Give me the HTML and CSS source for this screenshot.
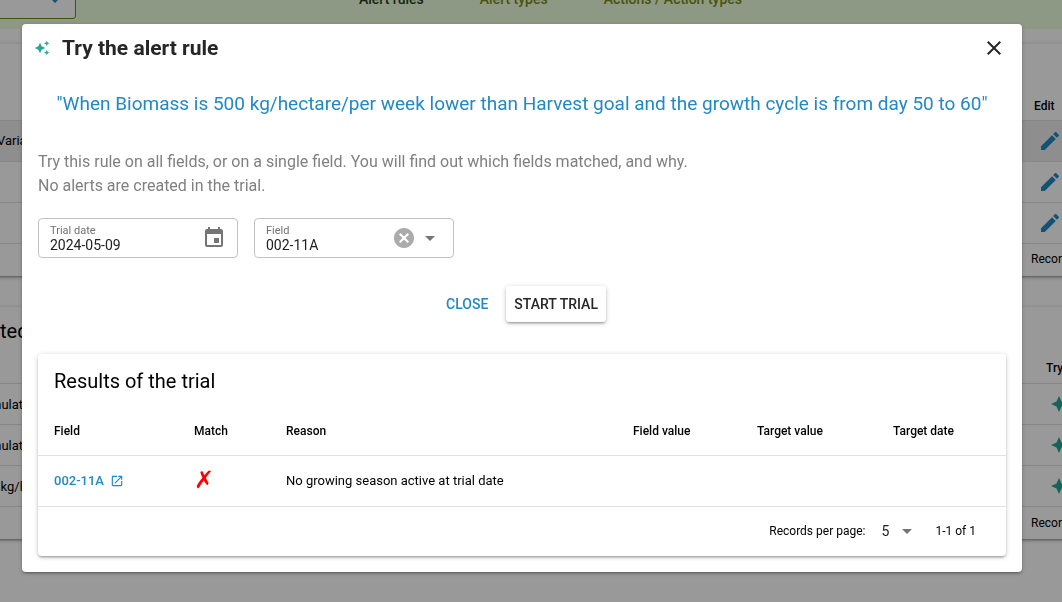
FILE: index.html
```html
<!DOCTYPE html>
<html lang="en">
<head>
    <meta charset="UTF-8">
    <meta name="viewport" content="width=device-width, initial-scale=1.0">
    <title>Try the alert rule</title>
    <link rel="stylesheet" href="styles.css">
</head>
<body>
    <!-- Shared icons -->
    <svg class="icon-defs" aria-hidden="true">
        <symbol id="icon-sparkle" viewBox="0 0 24 24"><path d="M19 9l1.25-2.75L23 5l-2.75-1.25L19 1l-1.25 2.75L15 5l2.75 1.25L19 9zm-7.5.5L9 4 6.5 9.5 1 12l5.5 2.5L9 20l2.5-5.5L17 12l-5.5-2.5zM19 15l-1.25 2.75L15 19l2.75 1.25L19 23l1.25-2.75L23 19l-2.75-1.25L19 15z"/></symbol>
        <symbol id="icon-edit" viewBox="0 0 24 24"><path d="M3 17.25V21h3.75L17.81 9.94l-3.75-3.75L3 17.25zM20.71 7.04c.39-.39.39-1.02 0-1.41l-2.34-2.34c-.39-.39-1.02-.39-1.41 0l-1.83 1.83 3.75 3.75 1.83-1.83z"/></symbol>
        <symbol id="icon-arrow" viewBox="0 0 24 24"><path d="M7 10l5 5 5-5z"/></symbol>
    </svg>

    <!-- Page behind the dialog -->
    <div class="page">
        <header class="top-bar">
            <div class="farm-select">
                <select aria-label="Farm"><option></option></select>
                <svg class="chevron" viewBox="0 0 24 24"><path d="M7.41 8.59L12 13.17l4.59-4.58L18 10l-6 6-6-6z"/></svg>
            </div>
            <nav class="tabs">
                <a href="#" class="active">Alert rules</a>
                <a href="#">Alert types</a>
                <a href="#">Actions / Action types</a>
            </nav>
        </header>

        <section class="card rules">
            <table>
                <thead>
                    <tr><th></th><th class="action">Edit</th></tr>
                </thead>
                <tbody>
                    <tr class="selected"><td>Variable</td><td class="action"><svg class="icon edit"><use href="#icon-edit"/></svg></td></tr>
                    <tr><td></td><td class="action"><svg class="icon edit"><use href="#icon-edit"/></svg></td></tr>
                    <tr><td></td><td class="action"><svg class="icon edit"><use href="#icon-edit"/></svg></td></tr>
                </tbody>
            </table>
            <div class="card-footer"><span>Records</span></div>
        </section>

        <section class="card suggested">
            <h2>ted</h2>
            <table>
                <thead>
                    <tr><th></th><th class="action">Try</th></tr>
                </thead>
                <tbody>
                    <tr><td>mulated</td><td class="action"><svg class="icon sparkle"><use href="#icon-sparkle"/></svg></td></tr>
                    <tr><td>mulated</td><td class="action"><svg class="icon sparkle"><use href="#icon-sparkle"/></svg></td></tr>
                    <tr><td>0 kg/ha</td><td class="action"><svg class="icon sparkle"><use href="#icon-sparkle"/></svg></td></tr>
                </tbody>
            </table>
            <div class="card-footer"><span>Records</span></div>
        </section>
    </div>

    <!-- Dialog -->
    <div class="overlay">
        <div class="dialog" role="dialog" aria-modal="true" aria-labelledby="dialogTitle">
            <div class="dialog-header">
                <svg class="icon sparkle small"><use href="#icon-sparkle"/></svg>
                <h1 id="dialogTitle">Try the alert rule</h1>
                <button type="button" class="icon-button" aria-label="Close dialog">
                    <svg class="icon" viewBox="0 0 24 24"><path d="M19 6.41L17.59 5 12 10.59 6.41 5 5 6.41 10.59 12 5 17.59 6.41 19 12 13.41 17.59 19 19 17.59 13.41 12z"/></svg>
                </button>
            </div>

            <p class="rule-text">"When Biomass is 500 kg/hectare/per week lower than Harvest goal and the growth cycle is from day 50 to 60"</p>

            <p class="intro">Try this rule on all fields, or on a single field. You will find out which fields matched, and why.<br>No alerts are created in the trial.</p>

            <form class="trial-form">
                <div class="fields">
                    <div class="field">
                        <div class="field-control">
                            <label for="trialDate">Trial date</label>
                            <input type="text" id="trialDate" value="2024-05-09">
                        </div>
                        <button type="button" class="icon-button muted" aria-label="Pick a date">
                            <svg class="icon" viewBox="0 0 24 24"><path d="M17 12h-5v5h5v-5zM16 1v2H8V1H6v2H5c-1.11 0-1.99.9-1.99 2L3 19c0 1.1.89 2 2 2h14c1.1 0 2-.9 2-2V5c0-1.1-.9-2-2-2h-1V1h-2zm3 18H5V8h14v11z"/></svg>
                        </button>
                    </div>
                    <div class="field">
                        <div class="field-control">
                            <label for="trialField">Field</label>
                            <select id="trialField"><option>002-11A</option></select>
                        </div>
                        <button type="button" class="icon-button clear" aria-label="Clear field">
                            <svg class="icon" viewBox="0 0 24 24"><path d="M12 2C6.47 2 2 6.47 2 12s4.47 10 10 10 10-4.47 10-10S17.53 2 12 2zm5 13.59L15.59 17 12 13.41 8.41 17 7 15.59 10.59 12 7 8.41 8.41 7 12 10.59 15.59 7 17 8.41 13.41 12 17 15.59z"/></svg>
                        </button>
                        <svg class="icon arrow"><use href="#icon-arrow"/></svg>
                    </div>
                </div>
                <div class="actions">
                    <button type="button" class="btn flat">CLOSE</button>
                    <button type="button" class="btn raised">START TRIAL</button>
                </div>
            </form>

            <section class="results">
                <h2>Results of the trial</h2>
                <table>
                    <colgroup>
                        <col class="col-field">
                        <col class="col-match">
                        <col>
                        <col class="col-value">
                        <col class="col-target">
                        <col class="col-date">
                    </colgroup>
                    <thead>
                        <tr>
                            <th>Field</th>
                            <th>Match</th>
                            <th>Reason</th>
                            <th>Field value</th>
                            <th>Target value</th>
                            <th>Target date</th>
                        </tr>
                    </thead>
                    <tbody>
                        <tr>
                            <td>
                                <a href="#" class="field-link">002-11A
                                    <svg viewBox="0 0 24 24"><path d="M19 19H5V5h7V3H5c-1.11 0-2 .9-2 2v14c0 1.1.89 2 2 2h14c1.1 0 2-.9 2-2v-7h-2v7zM14 3v2h3.59l-9.83 9.83 1.41 1.41L19 6.41V10h2V3h-7z"/></svg>
                                </a>
                            </td>
                            <td class="no-match">✗</td>
                            <td>No growing season active at trial date</td>
                            <td></td>
                            <td></td>
                            <td></td>
                        </tr>
                    </tbody>
                </table>
                <div class="pagination">
                    <label for="perPage">Records per page:</label>
                    <div class="per-page">
                        <select id="perPage"><option>5</option></select>
                        <svg class="icon arrow"><use href="#icon-arrow"/></svg>
                    </div>
                    <span>1-1 of 1</span>
                </div>
            </section>
        </div>
    </div>
</body>
</html>
```
FILE: styles.css
```css
/* General Styles */
* {
    box-sizing: border-box;
}

body {
    margin: 0;
    min-height: 100vh;
    overflow: hidden;
    font-family: Roboto, sans-serif;
    font-size: 14px;
    line-height: 21px;
    color: #000;
    background-color: #fff;
}

h1, h2, p {
    margin: 0;
}

a {
    text-decoration: none;
}

button, input, select {
    font-family: inherit;
    border: none;
    padding: 0;
    margin: 0;
    background: none;
    outline: none;
}

button {
    cursor: pointer;
}

select {
    appearance: none;
}

table {
    width: 100%;
    border-collapse: collapse;
    table-layout: fixed;
}

th, td {
    padding: 0 16px;
    text-align: left;
    white-space: nowrap;
    border-bottom: 1px solid #e0e0e0;
}

th {
    font-size: 12px;
    font-weight: 500;
}

td {
    font-size: 13px;
}

.icon-defs {
    display: none;
}

.icon {
    display: block;
    width: 24px;
    height: 24px;
    flex-shrink: 0;
    fill: currentColor;
}

.icon.small {
    width: 16px;
    height: 16px;
}

.sparkle {
    color: #26a69a;
}

/* Page behind the dialog */
.page {
    margin: 0 -10px;
}

.top-bar {
    display: flex;
    align-items: flex-end;
    gap: 283px;
    height: 29px;
    padding-bottom: 10px;
    background-color: #ebffdc;
}

.farm-select {
    display: flex;
    align-items: center;
    width: 86px;
    height: 40px;
    padding-right: 8px;
    border: 1px solid #6b8e0a;
    border-radius: 3px;
    background-color: #fff;
}

.farm-select select {
    flex: 1;
    min-width: 0;
}

.chevron {
    width: 24px;
    height: 24px;
    fill: #2189c4;
}

.tabs {
    display: flex;
    gap: 56px;
    padding-bottom: 9px;
    font-weight: 500;
}

.tabs a {
    color: #7a8c14;
}

.tabs a.active {
    color: #26401a;
}

.card {
    background-color: #fff;
    box-shadow: 0 1px 5px rgba(0, 0, 0, 0.2), 0 2px 2px rgba(0, 0, 0, 0.14), 0 3px 1px -2px rgba(0, 0, 0, 0.12);
}

.card th, .card td {
    height: 41px;
    padding: 0;
}

.card .action {
    width: 48px;
    padding-left: 14px;
}

.card th.action {
    padding-left: 10px;
}

.card-footer {
    display: flex;
    justify-content: flex-end;
    align-items: center;
    height: 32px;
    font-size: 12px;
}

.card-footer span {
    width: 41px;
}

.edit {
    color: #2189c4;
}

.rules {
    margin-top: 15px;
}

.rules th {
    height: 76px;
    padding-top: 50px;
}

.rules td:first-child {
    padding-left: 7px;
}

.rules .selected {
    background-color: #ededed;
}

.suggested {
    margin-top: 31px;
}

.suggested h2 {
    padding: 8px 10px 0;
    font-size: 20px;
    font-weight: 400;
    line-height: 32px;
}

.suggested th {
    height: 37px;
    padding-top: 8px;
}

.suggested td.action {
    padding-left: 26px;
}

.suggested th.action {
    padding-left: 22px;
}

/* Dialog */
.overlay {
    position: fixed;
    inset: 0;
    padding: 24px 40px 24px 22px;
    background-color: rgba(0, 0, 0, 0.4);
}

.dialog {
    max-width: 1000px;
    margin: 0 auto;
    padding: 0 16px 16px;
    border-radius: 4px;
    background-color: #fff;
    box-shadow: 0 1px 5px rgba(0, 0, 0, 0.2), 0 2px 2px rgba(0, 0, 0, 0.14), 0 3px 1px -2px rgba(0, 0, 0, 0.12);
}

.dialog-header {
    display: flex;
    align-items: center;
    gap: 12px;
    height: 48px;
    margin-left: -4px;
    color: #262626;
}

.dialog-header h1 {
    flex: 1;
    font-size: 21px;
    font-weight: 700;
    line-height: 32px;
}

.icon-button {
    color: inherit;
}

.icon-button.muted {
    color: #757575;
}

.icon-button.clear {
    color: #ababab;
}

.rule-text {
    padding: 16px 0;
    font-size: 19px;
    line-height: 32px;
    text-align: center;
    color: #2189c4;
}

.intro {
    padding: 14px 0 20px;
    font-size: 16px;
    line-height: 24px;
    color: #808080;
}

.fields {
    display: flex;
    gap: 16px;
}

.field {
    display: flex;
    align-items: center;
    width: 200px;
    height: 40px;
    padding: 0 11px;
    border: 1px solid #c2c2c2;
    border-radius: 4px;
}

.field-control {
    display: flex;
    flex-direction: column;
    flex: 1;
    min-width: 0;
}

.field-control label {
    font-size: 11px;
    line-height: 14px;
    color: #707070;
}

.field-control input,
.field-control select {
    width: 100%;
    height: 14px;
    font-size: 14px;
    line-height: 14px;
    color: #212121;
}

.arrow {
    color: #757575;
    pointer-events: none;
}

.clear + .arrow {
    margin-left: 2px;
}

.actions {
    display: flex;
    justify-content: center;
    gap: 10px;
    padding: 28px 0 32px;
}

.btn {
    height: 36px;
    padding: 0 8px;
    border-radius: 3px;
    font-size: 14px;
    font-weight: 500;
}

.btn.flat {
    color: #2189c4;
}

.btn.raised {
    color: #262626;
    background-color: #fff;
    box-shadow: 0 1px 5px rgba(0, 0, 0, 0.2), 0 2px 2px rgba(0, 0, 0, 0.14), 0 3px 1px -2px rgba(0, 0, 0, 0.12);
}

/* Results */
.results {
    border-radius: 4px;
    box-shadow: 0 1px 5px rgba(0, 0, 0, 0.2), 0 2px 2px rgba(0, 0, 0, 0.14), 0 3px 1px -2px rgba(0, 0, 0, 0.12);
}

.results h2 {
    padding: 12px 16px;
    font-size: 20px;
    font-weight: 400;
    line-height: 30px;
}

.results th {
    height: 47px;
}

.results td {
    height: 51px;
}

.col-field {
    width: 140px;
}

.col-match {
    width: 92px;
}

.col-value {
    width: 124px;
}

.col-target {
    width: 136px;
}

.col-date {
    width: 129px;
}

.field-link {
    display: flex;
    align-items: center;
    gap: 6px;
    font-weight: 500;
    color: #2189c4;
}

.field-link svg {
    width: 14px;
    height: 14px;
    fill: currentColor;
}

.results .no-match {
    font-family: "DejaVu Sans", sans-serif;
    font-size: 24px;
    font-weight: 700;
    color: #f00;
}

.pagination {
    display: flex;
    justify-content: flex-end;
    align-items: center;
    height: 49px;
    padding-right: 30px;
    gap: 16px;
    font-size: 12px;
}

.per-page {
    display: flex;
    align-items: center;
}

.per-page select {
    width: 14px;
    height: 24px;
    font-size: 14px;
    color: #212121;
}
```
